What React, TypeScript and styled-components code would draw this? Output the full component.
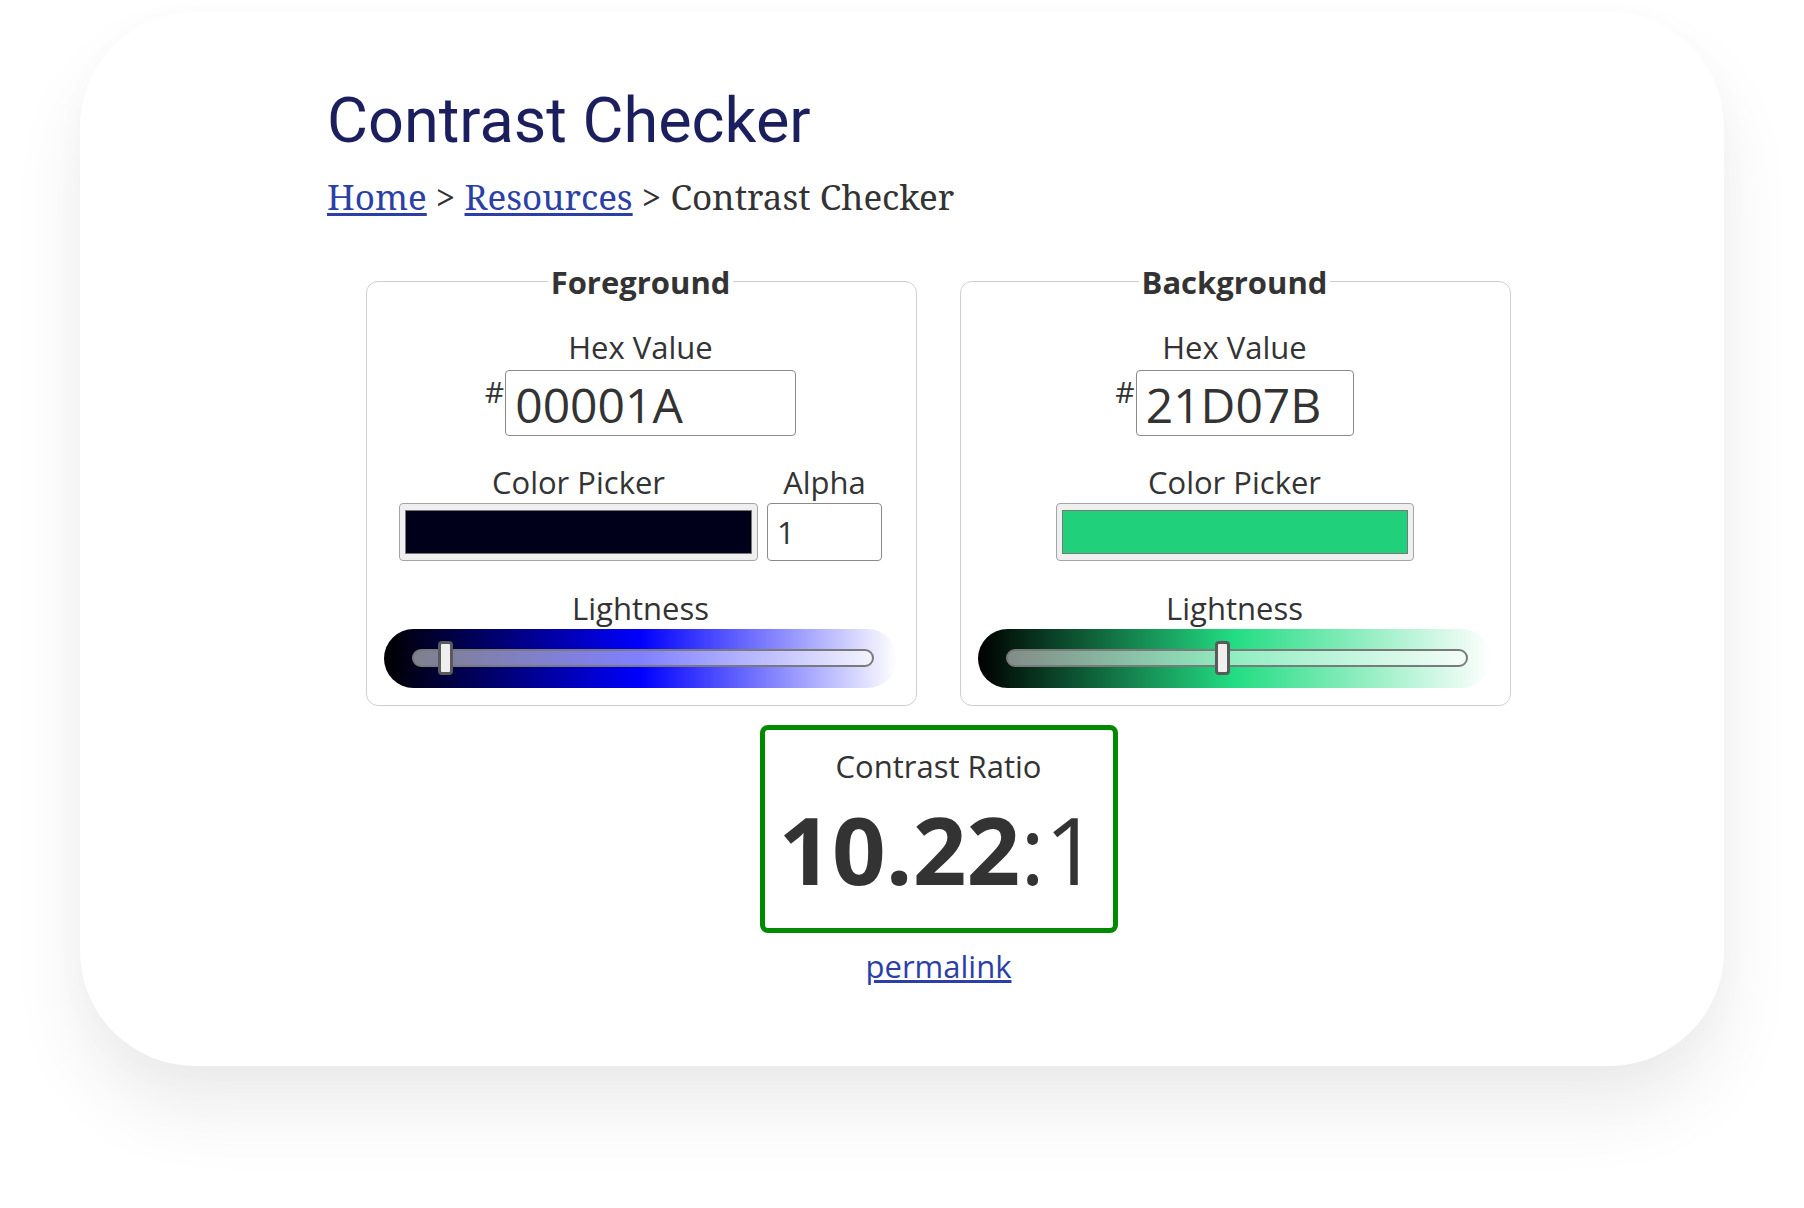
import React from "react";
import styled, { createGlobalStyle } from "styled-components";

const GlobalStyle = createGlobalStyle`
  html, body {
    margin: 0;
    padding: 0;
    background: #ffffff;
  }
  body {
    font-family: "Open Sans", "DejaVu Sans", sans-serif;
    color: #333333;
  }
`;

const Page = styled.div`
  box-sizing: border-box;
  min-height: 1208px;
  padding: 12px 0 140px 80px;
`;

const Card = styled.main`
  box-sizing: border-box;
  width: 1644px;
  padding: 72px 174px 79px 247px;
  background: #ffffff;
  border-radius: 115px;
  box-shadow: 0 45px 75px rgba(0, 0, 0, 0.075), 0 10px 40px rgba(0, 0, 0, 0.02);
`;

const Title = styled.h1`
  margin: 0;
  font-family: Roboto, "Liberation Sans", sans-serif;
  font-weight: 400;
  font-size: 63px;
  line-height: 1.172;
  color: #1c1f5e;
`;

const Breadcrumb = styled.nav`
  margin-top: 18px;
  font-family: "Noto Serif", "DejaVu Serif", "Liberation Serif", serif;
  font-size: 35px;
  line-height: 42px;
  color: #333333;
  white-space: nowrap;
`;

const Crumb = styled.a`
  color: #2b3fa6;
  text-decoration: underline;
  text-underline-offset: 3px;
`;

const Panels = styled.div`
  display: flex;
  justify-content: center;
  gap: 43px;
  margin-top: 43px;
`;

const Panel = styled.fieldset`
  box-sizing: border-box;
  width: 551px;
  min-width: 0;
  margin: 0;
  padding: 23px 19px 17px 17px;
  border: 1px solid #cfcfcf;
  border-radius: 12px;
`;

const Legend = styled.legend`
  margin: 0 auto;
  padding: 0 3px;
  font-size: 31px;
  line-height: 42px;
  font-weight: 700;
  color: #333333;
`;

const PanelBody = styled.div`
  display: flex;
  flex-direction: column;
  align-items: center;
`;

const Label = styled.div`
  font-size: 31px;
  line-height: 42px;
  color: #333333;
  text-align: center;
`;

const HexRow = styled.div`
  display: flex;
  align-items: flex-start;
  margin-top: 2px;
`;

const Hash = styled.span`
  font-size: 30px;
  line-height: 1;
  margin: 7px 1px 0 0;
  color: #333333;
`;

const HexInput = styled.input<{ $width: number }>`
  box-sizing: border-box;
  width: ${(p) => p.$width}px;
  height: 66px;
  margin: 0;
  padding: 3px 9px 0;
  border: 1px solid #8a8a8a;
  border-radius: 4px;
  font-family: "Open Sans", sans-serif;
  font-size: 48px;
  color: #333333;
  background: #ffffff;
  outline: none;
`;

const PickerRow = styled.div`
  display: flex;
  gap: 9px;
  margin-top: 25px;
`;

const PickerColumn = styled.div<{ $width: number }>`
  display: flex;
  flex-direction: column;
  align-items: center;
  width: ${(p) => p.$width}px;
`;

const Swatch = styled.div`
  box-sizing: border-box;
  width: 100%;
  height: 58px;
  padding: 6px 5px 6px 5px;
  border: 1px solid #a4a4a4;
  border-radius: 4px;
  background: #efefef;
`;

const SwatchColor = styled.div<{ $color: string }>`
  box-sizing: border-box;
  width: 100%;
  height: 100%;
  border: 1px solid #777777;
  background: ${(p) => p.$color};
`;

const AlphaInput = styled.input`
  box-sizing: border-box;
  width: 100%;
  height: 58px;
  margin: 0;
  padding: 0 9px;
  border: 1px solid #8a8a8a;
  border-radius: 4px;
  font-family: "Open Sans", sans-serif;
  font-size: 31px;
  color: #333333;
  background: #ffffff;
  outline: none;
`;

const LightnessGroup = styled.div`
  display: flex;
  flex-direction: column;
  align-items: center;
  width: 100%;
  margin-top: 26px;
`;

const SliderPill = styled.div<{ $hue: number; $sat: number }>`
  box-sizing: border-box;
  width: 100%;
  height: 59px;
  padding: 0 23px 0 28px;
  display: flex;
  align-items: center;
  border-radius: 30px;
  background: linear-gradient(
    to right,
    hsl(${(p) => p.$hue}, ${(p) => p.$sat}%, 0%),
    hsl(${(p) => p.$hue}, ${(p) => p.$sat}%, 25%),
    hsl(${(p) => p.$hue}, ${(p) => p.$sat}%, 50%),
    hsl(${(p) => p.$hue}, ${(p) => p.$sat}%, 75%),
    hsl(${(p) => p.$hue}, ${(p) => p.$sat}%, 100%)
  );
`;

const Track = styled.div`
  position: relative;
  box-sizing: border-box;
  flex: 1;
  height: 18px;
  border: 2px solid #7a7a7a;
  border-radius: 9px;
  background: rgba(255, 255, 255, 0.5);
`;

const Thumb = styled.div`
  position: absolute;
  top: -10px;
  box-sizing: border-box;
  width: 15px;
  height: 34px;
  border: 3px solid #5a5a5a;
  border-radius: 4px;
  background: #efefef;
`;

const Result = styled.section`
  display: flex;
  flex-direction: column;
  align-items: center;
  margin-top: 19px;
`;

const RatioBox = styled.div`
  box-sizing: border-box;
  width: 358px;
  padding: 15px 0 20px;
  border: 5px solid #008a00;
  border-radius: 8px;
  text-align: center;
`;

const RatioLabel = styled.div`
  font-size: 31px;
  line-height: 42px;
  color: #333333;
`;

const RatioValue = styled.div`
  margin-top: 4px;
  font-size: 94px;
  line-height: 1.25;
  color: #333333;
`;

const RatioStrong = styled.strong`
  font-weight: 700;
`;

const Permalink = styled.a`
  margin-top: 12px;
  font-size: 31px;
  line-height: 42px;
  color: #2b3fa6;
  text-decoration: underline;
`;

type ColorSpec = {
  name: string;
  hex: string;
  hue: number;
  sat: number;
  lightness: number;
  hexWidth: number;
  alpha?: string;
};

const colors: ColorSpec[] = [
  { name: "Foreground", hex: "00001A", hue: 240, sat: 100, lightness: 0.051, hexWidth: 291, alpha: "1" },
  { name: "Background", hex: "21D07B", hue: 151, sat: 73, lightness: 0.473, hexWidth: 218 },
];

function ColorPanel({ spec }: { spec: ColorSpec }) {
  return (
    <Panel>
      <Legend>{spec.name}</Legend>
      <PanelBody>
        <Label>Hex Value</Label>
        <HexRow>
          <Hash>#</Hash>
          <HexInput $width={spec.hexWidth} defaultValue={spec.hex} aria-label={`${spec.name} hex value`} />
        </HexRow>
        <PickerRow>
          <PickerColumn $width={spec.alpha ? 359 : 358}>
            <Label>Color Picker</Label>
            <Swatch>
              <SwatchColor $color={`#${spec.hex}`} />
            </Swatch>
          </PickerColumn>
          {spec.alpha && (
            <PickerColumn $width={115}>
              <Label>Alpha</Label>
              <AlphaInput defaultValue={spec.alpha} aria-label="Alpha" />
            </PickerColumn>
          )}
        </PickerRow>
        <LightnessGroup>
          <Label>Lightness</Label>
          <SliderPill $hue={spec.hue} $sat={spec.sat}>
            <Track>
              <Thumb style={{ left: `${2 + spec.lightness * 434}px` }} />
            </Track>
          </SliderPill>
        </LightnessGroup>
      </PanelBody>
    </Panel>
  );
}

export default function App() {
  return (
    <>
      <GlobalStyle />
      <Page>
        <Card>
          <Title>Contrast Checker</Title>
          <Breadcrumb>
            <Crumb href="#">Home</Crumb> &gt; <Crumb href="#">Resources</Crumb> &gt; Contrast Checker
          </Breadcrumb>
          <Panels>
            {colors.map((c) => (
              <ColorPanel key={c.name} spec={c} />
            ))}
          </Panels>
          <Result>
            <RatioBox>
              <RatioLabel>Contrast Ratio</RatioLabel>
              <RatioValue>
                <RatioStrong>10.22</RatioStrong>:1
              </RatioValue>
            </RatioBox>
            <Permalink href="#">permalink</Permalink>
          </Result>
        </Card>
      </Page>
    </>
  );
}
